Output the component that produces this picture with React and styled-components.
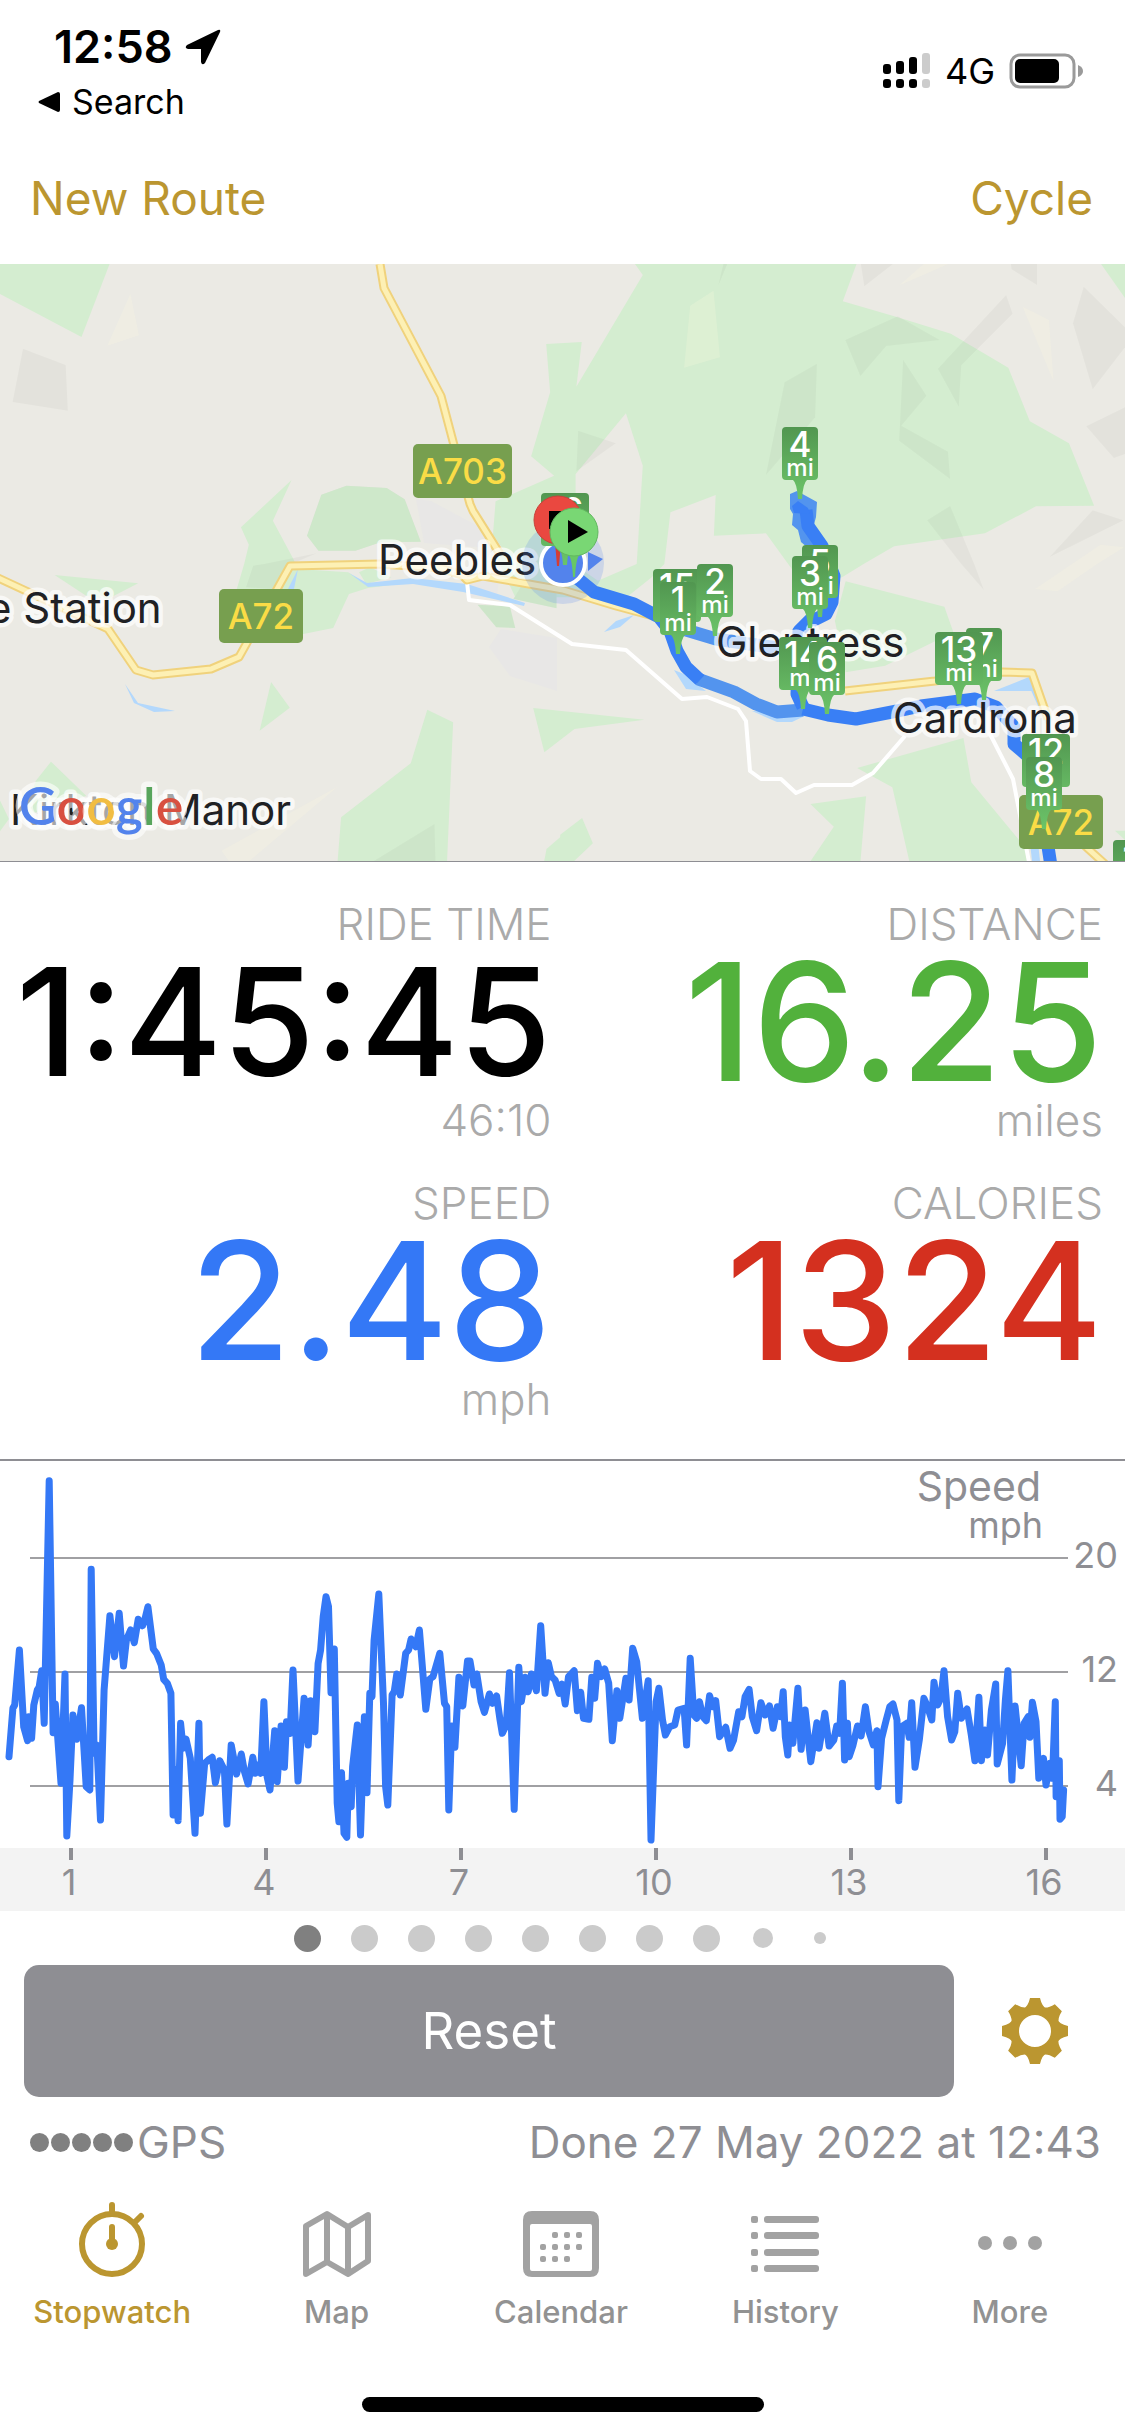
import React from "react";
import styled, { createGlobalStyle } from "styled-components";

const GOLD = "#bb9630";
const GREY = "#8e8e93";
const BLUE = "#3478f6";

const GlobalStyle = createGlobalStyle`
  * { box-sizing: border-box; }
  body {
    margin: 0;
    background: #fff;
    color: #000;
    font-family: Inter, "Liberation Sans", sans-serif;
  }
  button { font: inherit; border: 0; background: none; padding: 0; cursor: pointer; }
`;

const Screen = styled.div`
  display: flex;
  flex-direction: column;
  width: 100%;
`;

/* ---------- status bar ---------- */

const StatusBar = styled.header`
  display: flex;
  justify-content: space-between;
  align-items: center;
  padding: 20px 42px 10px 38px;
`;

const StatusLeft = styled.div`
  display: flex;
  flex-direction: column;
  gap: 8px;
`;

const Clock = styled.div`
  display: flex;
  align-items: center;
  gap: 12px;
  padding-left: 16px;
  font-size: 45px;
  font-weight: 600;
  line-height: 54px;
`;

const BackLink = styled.a`
  display: flex;
  align-items: center;
  gap: 12px;
  color: #000;
  text-decoration: none;
  font-size: 34px;
  line-height: 40px;
`;

const StatusRight = styled.div`
  display: flex;
  align-items: center;
  gap: 14px;
  font-size: 36px;
  line-height: 40px;
`;

/* ---------- navigation bar ---------- */

const NavBar = styled.nav`
  display: flex;
  justify-content: space-between;
  padding: 0 32px 0 30px;
`;

const NavButton = styled.button`
  color: ${GOLD};
  font-size: 46px;
  line-height: 132px;
`;

/* ---------- map ---------- */

const MapPane = styled.section`
  border-bottom: 1px solid ${GREY};
  svg { display: block; width: 100%; height: auto; }
`;

/* ---------- stats ---------- */

const Stats = styled.section`
  display: grid;
  grid-template-columns: 1fr 1fr;
  row-gap: 27px;
  padding: 34px 22px 32px 0;
`;

const Stat = styled.div`
  display: flex;
  flex-direction: column;
  align-items: flex-end;
`;

const StatNote = styled.div`
  height: 56px;
  color: #aaa;
  font-size: 44px;
  font-weight: 300;
  line-height: 56px;
`;

const StatValue = styled.div`
  color: ${(p) => p.$color};
  font-size: ${(p) => (p.$long ? 150 : 164)}px;
  font-weight: 500;
  line-height: 140px;
  white-space: nowrap;
`;

/* ---------- chart ---------- */

const ChartPane = styled.section`
  border-top: 2px solid ${GREY};
  svg { display: block; width: 100%; height: auto; }
`;

/* ---------- pager and controls ---------- */

const Pager = styled.div`
  display: flex;
  justify-content: center;
  align-items: center;
  height: 54px;
  padding-left: 2px;
`;

const PagerCell = styled.span`
  display: flex;
  justify-content: center;
  width: 57px;
`;

const PagerDot = styled.span`
  width: ${(p) => p.$size}px;
  height: ${(p) => p.$size}px;
  border-radius: 50%;
  background: ${(p) => (p.$active ? "#808080" : "#cbcbcb")};
`;

const Controls = styled.div`
  display: flex;
  padding: 0 9px 0 24px;
`;

const ResetButton = styled.button`
  flex: 1;
  border-radius: 15px;
  background: ${GREY};
  color: #fff;
  font-size: 51px;
  line-height: 132px;
`;

const SettingsButton = styled.button`
  display: flex;
  align-items: center;
  justify-content: center;
  width: 162px;
`;

const Footnote = styled.div`
  display: flex;
  justify-content: space-between;
  padding: 0 24px 0 30px;
  color: ${GREY};
  font-size: 44px;
  line-height: 90px;
`;

const Gps = styled.div`
  display: flex;
  align-items: center;
  gap: 4px;
`;

const GpsDots = styled.span`
  display: flex;
  gap: 2px;
`;

const GpsDot = styled.span`
  width: 19px;
  height: 19px;
  border-radius: 50%;
  background: #808080;
`;

/* ---------- tab bar ---------- */

const TabBar = styled.nav`
  display: grid;
  grid-template-columns: repeat(5, 1fr);
  padding: 15px 3px 0 0;
`;

const Tab = styled.button`
  display: flex;
  flex-direction: column;
  align-items: center;
  gap: 15px;
  color: ${(p) => (p.$active ? GOLD : "#929292")};
  font-size: 31px;
  font-weight: 500;
  line-height: 40px;
`;

const HomeArea = styled.div`
  display: flex;
  justify-content: center;
  padding: 65px 0 24px;
`;

const HomeIndicator = styled.div`
  width: 402px;
  height: 15px;
  border-radius: 8px;
  background: #000;
`;

/* ---------- map drawing ---------- */

const GREEN = "#d4edd0";
const UNIT_X = 563 / 1568;
const UNIT_Y = 1 / 3;

const tiles = [
  {
    x: 0,
    y: 0,
    parks: [
      "-5,-5 307,-5 227,219 -5,87",
      "812,648 671,790 693,842 680,900 658,980 800,1110 845,1110 928,1092 972,990 1025,972 1150,955 1020,962 970,925 830,915 817,885 760,770",
    ],
    shades: [
      "64,254 183,303 189,440 35,414",
      "965,665 895,692 855,815 887,860 990,860 1060,835 1172,833 1127,706 1077,672",
      "882,868 735,900 705,905 685,970 760,975 800,905",
    ],
    woods: ["965,665 895,692 855,815 887,860 990,860 1060,835 1172,833 1127,706 1077,672"],
    lights: ["363,90 387,214 299,245"],
  },
  {
    x: 562,
    y: 0,
    parks: [
      "200,-5 225,33 40,368 55,234 -44,240 -33,385 -86,577 -22,635 -185,712 -195,850 -130,1000 60,1000 180,1000 250,940 285,900 302,745 428,693 423,815 568,808 640,915 700,960 780,940 840,900 925,847 1178,808 1320,727 1482,725 1412,538 1303,472 1243,311 1083,209 935,160 782,112 822,-5",
      "1498,-5 1570,105 1570,-5",
    ],
    holes: ["178,448 225,605 208,900 100,950 60,920 38,800 38,630"],
    shades: [
      "450,-2 461,-2 435,65",
      "620,355 710,299 705,460 650,530 568,633",
      "789,228 935,157 1052,228 903,246 831,336",
      "950,287 1015,395 945,485 1075,563 1081,645 939,530",
      "1237,93 1255,149 1112,304 1105,428 1047,314",
      "832,-2 924,-2 842,67",
      "1250,-2 1323,-2 1323,63 1252,16",
      "1453,68 1568,190 1568,250 1478,376 1423,178",
      "1568,430 1568,570 1537,582 1460,487",
      "45,500 150,538 40,622",
      "1081,726 1148,900 1175,978 1112,900 1017,769",
      "1478,739 1564,769 1358,879",
    ],
    lights: [
      "422,80 440,280 340,311 357,125",
      "1283,128 1356,168 1369,352",
      "1010,-2 1080,-2 940,64",
      "1500,842 1565,850 1490,900 1380,982 1318,975",
    ],
  },
  {
    x: 0,
    y: 300,
    parks: [
      "152,33 385,58 300,105 240,95",
      "755,354 807,431 723,500",
      "142,593 240,695 60,760 100,650",
      "-2,705 25,765 -2,805",
      "1190,437 1262,475 1245,895 940,895 950,760 1144,598",
      "1485,432 1795,467 1600,495 1516,565",
      "1568,812 1522,855 1515,895 1570,895",
      "1330,122 1420,127 1435,192 1382,190",
      "1455,60 1430,105 1550,133 1550,60",
      "1000,25 1030,10 1090,40 1020,60",
    ],
    shades: [
      "1210,780 1213,895 1035,895",
      "1330,122 1420,127 1435,192 1382,190",
      "1455,60 1430,105 1550,133 1550,60",
    ],
    lights: ["940,668 617,860 640,895 690,895"],
  },
  {
    x: 562,
    y: 300,
    parks: [
      "790,52 1065,128 1090,205 900,305 790,325 760,170",
      "56,762 86,838 30,895 -5,895 -5,812",
      "692,720 847,697 831,895 690,895 757,788",
      "822,612 1118,522 1140,655 1290,850 1303,895 968,895 920,670",
      "1540,800 1570,800 1570,830",
    ],
    shades: [],
    lights: [],
  },
];

const urban = [
  "416,235 424,279 503,285 489,265 474,260 431,237",
  "501,365 557,374 557,427 510,412 489,383",
  "468,306 500,306 497,332 468,333",
];

const water = [
  "298,305 294,325 288,325",
  "349,309 367,319 413,314 467,320 525,339 524,342 463,328 413,320 368,323",
  "125,420 138,439 175,447 154,448 134,439",
  "604,368 616,357 634,351 620,363",
  "674,406 684,410 706,427 686,425",
  "752,447 777,458 792,458 813,448",
  "994,427 1029,413 1035,427",
  "1026,415 1031,413 1050,460 1046,460",
  "1028,560 1036,560 1040,597 1032,597",
];

const highways = [
  "380,0 384,24 441,132 455,185 470,240 473,247 500,290",
  "-4,313 108,365 136,406 153,411 211,405 239,393 290,302 380,300 440,304 462,311 467,316 483,312 563,326 616,342 690,362",
  "845,427 935,417 1002,408 1032,409 1048,455",
  "1085,582 1105,600",
];

const lanes = [
  "467,318 469,336 510,341 572,380 626,386 682,435 707,433 738,445 746,457 750,507 761,515 781,515 796,529 814,521 852,521 873,509 905,472",
  "989,468 1013,515 1029,598",
];

const singlePass = [
  "666,360 716,375 763,382 797,386",
  "698,415 734,428 756,440 777,448 803,446",
];

const doublePass = [
  "572,310 594,328 634,340 659,353 670,367 677,387 686,403 700,416",
  "812,354 799,367 797,430 803,443",
  "803,445 828,451 856,455 892,448 921,442 975,435 996,443 1014,463 1014,480 1029,493 1045,563 1051,602",
  "806,246 808,262 822,282 834,312 832,338 826,350 812,357",
];

const badges = [
  { x: 413, y: 180, w: 99, label: "A703" },
  { x: 219, y: 325, w: 84, label: "A72" },
  { x: 1019, y: 531, w: 84, label: "A72" },
];

const places = [
  { x: 378, y: 311, name: "Peebles" },
  { x: -13, y: 359, name: "e Station" },
  { x: 10, y: 561, name: "Kirkton Manor" },
  { x: 716, y: 393, name: "Glentress" },
  { x: 893, y: 469, name: "Cardrona" },
];

const mileMarkers = [
  { x: 565, y: 229, n: 16 },
  { x: 800, y: 163, n: 4 },
  { x: 820, y: 281, n: 5 },
  { x: 810, y: 292, n: 3 },
  { x: 677, y: 305, n: 15 },
  { x: 715, y: 300, n: 2 },
  { x: 678, y: 318, n: 1 },
  { x: 803, y: 373, n: 14 },
  { x: 827, y: 378, n: 6 },
  { x: 984, y: 364, n: 7 },
  { x: 959, y: 368, n: 13 },
  { x: 1046, y: 470, n: 12 },
  { x: 1044, y: 493, n: 8 },
  { x: 1137, y: 576, n: 11 },
];

function MileMarker({ x, y, n }) {
  const half = n > 9 ? 24 : 18;
  return (
    <g transform={`translate(${x} ${y})`}>
      <path
        fill="url(#marker)"
        d={`M${4 - half} 0H${half - 4}q4 0 4 4V49q0 4 -4 4H7Q3 56 2 72H-2Q-3 56 -7 53H${4 - half}q-4 0 -4 -4V4q0 -4 4 -4z`}
      />
      <text y="30" fontSize="35">{n}</text>
      <text y="49" fontSize="24">mi</text>
    </g>
  );
}

function RouteMap() {
  return (
    <svg viewBox="0 0 1125 597" role="img" aria-label="Route map">
      <defs>
        <linearGradient id="marker" x1="0" y1="0" x2="0" y2="1">
          <stop offset="0" stopColor="#519650" />
          <stop offset="0.75" stopColor="#66b963" />
          <stop offset="1" stopColor="#6ac468" />
        </linearGradient>
      </defs>
      <rect width="1125" height="597" fill="#ebeae4" />
      {tiles.map((t) => (
        <g key={`${t.x}-${t.y}`} transform={`translate(${t.x} ${t.y}) scale(${UNIT_X} ${UNIT_Y})`}>
          {t.parks.map((p) => <polygon key={p} points={p} fill={GREEN} />)}
          {(t.holes || []).map((p) => <polygon key={p} points={p} fill="#ebeae4" />)}
          {t.shades.map((p) => <polygon key={p} points={p} fill="#000" opacity="0.03" />)}
          {(t.woods || []).map((p) => <polygon key={p} points={p} fill="#cee8ca" />)}
          {t.lights.map((p) => <polygon key={p} points={p} fill="#fffbe0" opacity="0.22" />)}
        </g>
      ))}
      {urban.map((p) => <polygon key={p} points={p} fill="#e8e7e6" />)}
      {water.map((p) => <polygon key={p} points={p} fill="#b3d8fc" />)}
      <g fill="none" strokeLinejoin="round">
        {lanes.map((p) => <polyline key={p} points={p} stroke="#fff" strokeWidth="4" />)}
        {highways.map((p) => <polyline key={p} points={p} stroke="#f0d27c" strokeWidth="9" />)}
        {highways.map((p) => <polyline key={p} points={p} stroke="#fdf0b4" strokeWidth="5" />)}
        {singlePass.map((p) => <polyline key={p} points={p} stroke="#5394ee" strokeWidth="13" />)}
      </g>
      <polygon fill="#5394ee" points="790,230 797,227 817,238 816,253 812,268 822,281 808,284 801,278 798,266 792,261 793,250 790,245" />
      <g fill="none" stroke="#397ff5" strokeWidth="13" strokeLinejoin="round">
        {doublePass.map((p) => <polyline key={p} points={p} />)}
      </g>
      <path fill="#397ff5" d="M792 242l6-5 10 7 2 6-16-1z" />

      <g fontSize="35" fontWeight="500" textAnchor="middle" fill="#fadc46">
        {badges.map((b) => (
          <g key={b.x}>
            <rect x={b.x} y={b.y} width={b.w} height="54" rx="5" fill="#779f4f" />
            <text x={b.x + b.w / 2} y={b.y + 40}>{b.label}</text>
          </g>
        ))}
      </g>

      <g fontSize="42" fill="#202124" stroke="#fff" strokeOpacity="0.7" strokeWidth="9" strokeLinejoin="round" paintOrder="stroke">
        {places.map((p) => <text key={p.name} x={p.x} y={p.y}>{p.name}</text>)}
      </g>

      <text
        x="19" y="561" fontSize="52" fontWeight="600" fontFamily="Lato, sans-serif"
        stroke="#fff" strokeOpacity="0.6" strokeWidth="11" strokeLinejoin="round" paintOrder="stroke"
      >
        <tspan fill="#5383ec">G</tspan>
        <tspan fill="#d85040">o</tspan>
        <tspan fill="#f1bd42">o</tspan>
        <tspan fill="#5383ec">g</tspan>
        <tspan fill="#58a55c">l</tspan>
        <tspan fill="#d85040">e</tspan>
      </text>

      <circle cx="563" cy="299" r="41" fill="#4f83ee" opacity="0.2" />
      <path d="M588 288l15 7-15 12z" fill="#5383ec" />
      <circle cx="563" cy="299" r="22" fill="#5383ec" stroke="#fff" strokeWidth="4" />

      <g fill="#fff" fontWeight="500" textAnchor="middle">
        {mileMarkers.map((m) => <MileMarker key={m.n} {...m} />)}
      </g>

      <path d="M555 278h6l-2 24h-2z" fill="#d63d34" />
      <circle cx="558" cy="256" r="24" fill="#ea4840" stroke="#c8423a" />
      <rect x="549" y="247" width="18" height="18" />
      <path d="M567 289q5 3 6 24h2q1-21 6-24z" fill="#68c765" />
      <circle cx="574" cy="268" r="24" fill="#79d774" stroke="#62b860" />
      <path d="M568 256l20 12-20 11z" />
    </svg>
  );
}

/* ---------- speed chart ---------- */

const firstHalf = `25,920 36,775 41,765 54,600 66,830 77,872 80,800 88,865 94,765 104,720 109,712 116,662 123,820 137,92
148,848 154,762 170,1000 181,672 186,1158 195,990 203,795 214,868 227,773 240,1010 250,1020 254,358 262,910 270,885
280,1110 290,720 306,497 319,620 332,490 344,648 352,570 364,540 374,578 385,508 397,527 403,510 412,470 427,597
436,610 449,645 456,688 466,700 476,730 482,1095 490,960 496,1112 503,820 510,895 518,867 530,925 543,1150 554,820
558,1090 570,940 580,930 591,922 600,998 612,932 625,960 632,1122 644,885 659,972 672,912 681,965 691,1002 704,922
711,970 718,945 726,970 735,755 744,980 752,1020 765,842 772,995 783,828 792,952 798,815 808,850 816,660 830,993
847,745 858,885 865,752 877,845 886,640 893,600 900,500 908,440 915,470 922,728 931,597 939,1060 944,1115 951,968 958,1150
966,1162 970,1000 978,1070 982,950 995,825 1004,1155 1015,800 1022,1028 1030,730 1036,740 1042,570 1055,432 1068,760
1074,1010 1080,1065 1092,735 1098,725 1105,672 1115,735 1130,610 1138,600 1145,567 1158,590 1168,540 1186,778
1197,687 1206,680 1214,650 1225,610 1238,760 1244,770 1250,1080 1258,828 1267,892 1278,682 1289,768 1302,633
1309,633 1320,705 1328,672 1340,755 1349,787 1363,732 1372,760 1383,738 1392,805 1399,850 1410,825 1419,668
1432,1078 1445,652 1452,755 1463,682 1471,725 1480,672 1494,722 1506,527 1518,730 1527,638 1536,680 1546,690
1557,730 1565,702`;

const secondHalf = `9,762 18,680 34,662 43,782 52,727 60,805 75,808 83,682 91,745 99,640 109,680 119,657 130,700 140,872
153,722 161,805 178,685 187,750 197,595 208,635 224,805 240,692 248,1170 262,755 270,715 280,810 288,855 300,830
314,825 323,780 340,775 347,885 357,625 367,795 375,805 383,755 392,800 402,812 411,737 420,770 428,752 439,860
456,832 468,895 478,870 492,785 501,800 510,740 521,718 530,800 542,842 554,758 566,795 578,768 588,835 600,770
609,800 616,725 622,860 629,915 634,825 643,880 657,715 666,898 677,780 693,935 710,818 716,895 732,790 744,888
757,870 765,828 773,850 781,700 787,930 795,820 800,920 810,888 823,828 833,858 845,770 855,845 867,885 877,842
880,1010 890,865 903,810 913,770 922,762 933,810 938,1052 946,830 960,820 967,862 974,758 983,952 995,870 1008,745
1018,770 1030,810 1036,697 1046,765 1055,745 1064,662 1074,800 1085,870 1094,845 1102,730 1112,805 1128,777
1140,855 1150,932 1161,742 1168,932 1178,840 1185,915 1196,780 1208,702 1212,942 1227,880 1235,750 1242,662
1253,990 1262,768 1279,947 1287,820 1298,800 1303,862 1310,757 1320,815 1328,985 1341,925 1348,1005 1359,940
1366,985 1374,755 1376,1040 1385,932 1387,1108 1393,1100 1397,1020`;

const toPoints = (samples, offset) =>
  samples
    .trim()
    .split(/\s+/)
    .map((pair) => {
      const [x, y] = pair.split(",").map(Number);
      return `${(offset + x * UNIT_X).toFixed(1)},${(y * UNIT_Y - 11).toFixed(1)}`;
    })
    .join(" ");

const speedLine = `${toPoints(firstHalf, 0)} ${toPoints(secondHalf, 562)}`;

const speedTicks = [
  { y: 97, label: 20 },
  { y: 211, label: 12 },
  { y: 325, label: 4 },
];

const mileTicks = [1, 4, 7, 10, 13, 16].map((mile, i) => ({ mile, x: 71 + i * 195 }));

function SpeedChart() {
  return (
    <svg viewBox="0 0 1125 450" role="img" aria-label="Speed in mph by mile" fill={GREY} fontSize="36">
      <rect y="387" width="1125" height="63" fill="#f3f3f3" />
      {speedTicks.map((t) => (
        <g key={t.label}>
          <path d={`M30 ${t.y}H1068`} stroke="#a0a0a3" strokeWidth="2" />
          <text x="1118" y={t.y + 10} textAnchor="end">{t.label}</text>
        </g>
      ))}
      {mileTicks.map((t) => (
        <g key={t.mile}>
          <rect x={t.x - 2} y="387" width="4" height="12" />
          <text x={t.x - 2} y="434" textAnchor="middle">{t.mile}</text>
        </g>
      ))}
      <text x="1041" y="40" fontSize="41" textAnchor="end">Speed</text>
      <text x="1043" y="77" textAnchor="end">mph</text>
      <polyline points={speedLine} fill="none" stroke={BLUE} strokeWidth="7" strokeLinejoin="round" strokeLinecap="round" />
    </svg>
  );
}

/* ---------- icons ---------- */

const LocationIcon = () => (
  <svg width="36" height="36" viewBox="0 0 36 36" aria-hidden="true">
    <path d="M35 3Q36 0 33 1L2 16q-3 3 1 4l13 0 0 13q1 4 4 1z" />
  </svg>
);

const SignalIcon = () => (
  <svg width="48" height="36" viewBox="0 0 48 36" aria-hidden="true">
    {[11, 8, 4, 0].map((top, i) => (
      <g key={top} fill={i === 3 ? "#ccc" : "#000"}>
        <rect x={i * 13} y={top} width="8" height={21 - top} rx="3" />
        <rect x={i * 13} y="26" width="8" height="9" rx="3" />
      </g>
    ))}
  </svg>
);

const BatteryIcon = () => (
  <svg width="74" height="36" viewBox="0 0 74 36" aria-hidden="true">
    <rect x="2" y="2" width="63" height="32" rx="9" fill="none" stroke="#9a9a9a" strokeWidth="3" />
    <rect x="6" y="6" width="44" height="24" rx="5" />
    <path d="M69 12q5 2 5 6t-5 6z" fill="#9a9a9a" />
  </svg>
);

const GearIcon = () => (
  <svg width="66" height="66" viewBox="-33 -33 66 66" fill={GOLD} aria-hidden="true">
    <circle r="20" fill="none" stroke={GOLD} strokeWidth="8" />
    {[0, 45, 90, 135, 180, 225, 270, 315].map((a) => (
      <path key={a} transform={`rotate(${a})`} d="M-5 -33H5Q7 -24 12 -22L8 -18H-8L-12 -22Q-7 -24 -5 -33z" />
    ))}
  </svg>
);

const StopwatchIcon = () => (
  <svg width="68" height="75" viewBox="0 0 68 75" fill="none" stroke="currentColor" strokeWidth="6" strokeLinecap="round" aria-hidden="true">
    <circle cx="34" cy="42" r="30" />
    <path d="M34 3v8M57 20l6-6M34 25v16" />
    <circle cx="34" cy="42" r="6" fill="currentColor" stroke="none" />
  </svg>
);

const MapIcon = () => (
  <svg width="70" height="75" viewBox="0 0 70 75" fill="none" stroke="#a2a2a2" strokeWidth="6" strokeLinejoin="round" aria-hidden="true">
    <path d="M4 24V72L25 60 46 72 66 59V13L46 25 25 12zM25 12V60M46 25V72" />
  </svg>
);

const calendarDays = [[43, 31], [55, 31], [67, 31], [31, 43], [43, 43], [55, 43], [67, 43], [31, 55], [43, 55], [55, 55]];

const CalendarIcon = () => (
  <svg width="76" height="75" viewBox="0 0 76 75" fill="#a2a2a2" aria-hidden="true">
    <path fillRule="evenodd" d="M9 9H67q9 0 9 9V66q0 9-9 9H9q-9 0-9-9V18q0-9 9-9zM9 22q-2 0-2 2V67q0 2 2 2H67q2 0 2-2V24q0-2-2-2z" />
    {calendarDays.map(([x, y]) => (
      <rect key={`${x}-${y}`} x={x - 14} y={y - 1} width="6" height="6" rx="2" />
    ))}
  </svg>
);

const HistoryIcon = () => (
  <svg width="68" height="75" viewBox="0 0 68 75" fill="#a2a2a2" aria-hidden="true">
    {[14, 30, 47, 63].map((y) => (
      <g key={y}>
        <rect x="0" y={y} width="7" height="7" rx="2" />
        <rect x="13" y={y} width="55" height="7" rx="3" />
      </g>
    ))}
  </svg>
);

const MoreIcon = () => (
  <svg width="64" height="75" viewBox="0 0 64 75" fill="#a2a2a2" aria-hidden="true">
    {[7, 32, 57].map((x) => <circle key={x} cx={x} cy="41" r="7" />)}
  </svg>
);

/* ---------- page ---------- */

const stats = [
  { label: "RIDE TIME", value: "1:45:45", note: "46:10", color: "#000", long: true },
  { label: "DISTANCE", value: "16.25", note: "miles", color: "#52b13c" },
  { label: "SPEED", value: "2.48", note: "mph", color: BLUE },
  { label: "CALORIES", value: "1324", note: "", color: "#d4301f" },
];

const pagerSizes = [27, 27, 27, 27, 27, 27, 27, 27, 20, 12];

const tabs = [
  { label: "Stopwatch", Icon: StopwatchIcon },
  { label: "Map", Icon: MapIcon },
  { label: "Calendar", Icon: CalendarIcon },
  { label: "History", Icon: HistoryIcon },
  { label: "More", Icon: MoreIcon },
];

export default function App() {
  return (
    <Screen>
      <GlobalStyle />
      <StatusBar>
        <StatusLeft>
          <Clock>12:58<LocationIcon /></Clock>
          <BackLink href="#search">
            <svg width="22" height="22" viewBox="0 0 22 22" aria-hidden="true">
              <path d="M1 10L20 1q2 0 2 2V19q0 2-2 2L1 12q-1-1 0-2z" />
            </svg>
            Search
          </BackLink>
        </StatusLeft>
        <StatusRight><SignalIcon />4G<BatteryIcon /></StatusRight>
      </StatusBar>

      <NavBar>
        <NavButton>New Route</NavButton>
        <NavButton>Cycle</NavButton>
      </NavBar>

      <MapPane><RouteMap /></MapPane>

      <Stats>
        {stats.map((s) => (
          <Stat key={s.label}>
            <StatNote>{s.label}</StatNote>
            <StatValue $color={s.color} $long={s.long}>{s.value}</StatValue>
            <StatNote>{s.note}</StatNote>
          </Stat>
        ))}
      </Stats>

      <ChartPane><SpeedChart /></ChartPane>

      <Pager>
        {pagerSizes.map((size, i) => (
          <PagerCell key={i}><PagerDot $size={size} $active={i === 0} /></PagerCell>
        ))}
      </Pager>

      <Controls>
        <ResetButton>Reset</ResetButton>
        <SettingsButton aria-label="Settings"><GearIcon /></SettingsButton>
      </Controls>

      <Footnote>
        <Gps>
          <GpsDots>{[0, 1, 2, 3, 4].map((i) => <GpsDot key={i} />)}</GpsDots>
          GPS
        </Gps>
        <span>Done 27 May 2022 at 12:43</span>
      </Footnote>

      <TabBar>
        {tabs.map(({ label, Icon }, i) => (
          <Tab key={label} $active={i === 0}><Icon />{label}</Tab>
        ))}
      </TabBar>

      <HomeArea><HomeIndicator /></HomeArea>
    </Screen>
  );
}
